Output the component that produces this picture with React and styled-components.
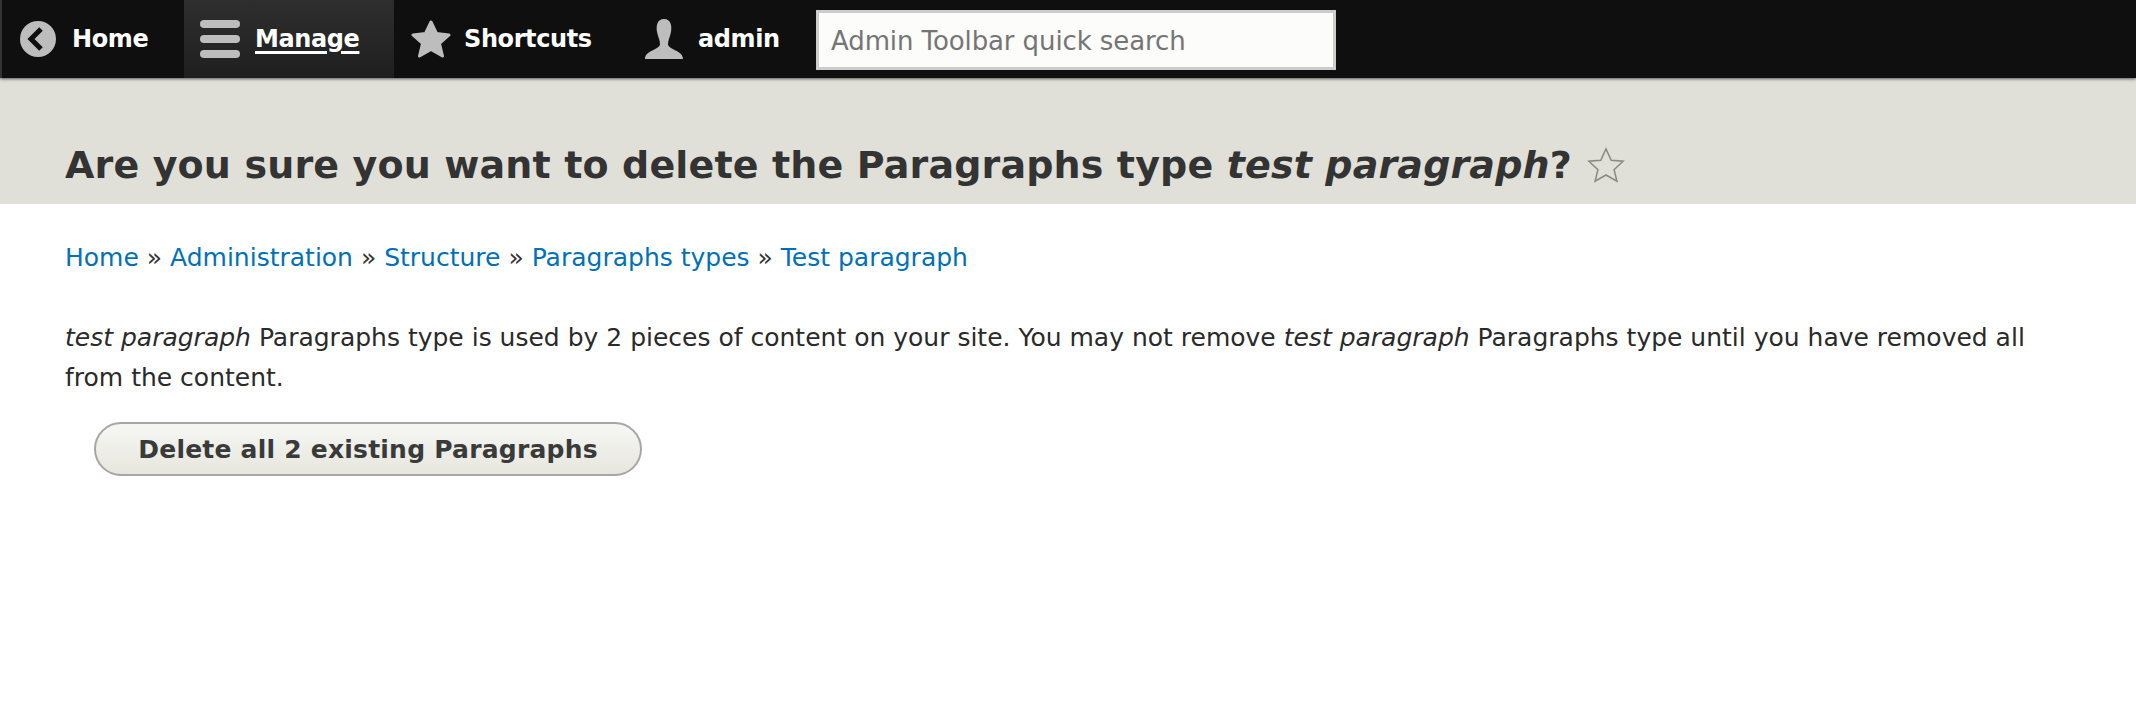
import React from "react";
import styled, { createGlobalStyle } from "styled-components";

const Global = createGlobalStyle`
  html, body { margin: 0; padding: 0; background: #fff; }
  body { font-family: "DejaVu Sans", "Liberation Sans", sans-serif; color: #333; }
`;
const Toolbar = styled.nav`
  height: 78px; background: #0f0f0f; display: flex; align-items: stretch;
  box-shadow: 0 1px 3px rgba(0,0,0,.6); position: relative; border-left: 2px solid #333; box-sizing: border-box;
`;
const Tab = styled.a`
  display: flex; align-items: center; width: ${p => p.$w}px; padding-left: ${p => p.$pad}px; box-sizing: border-box;
  gap: ${p => p.$gap}px; color: #fff; font-weight: 700; font-size: 24px; letter-spacing: -.4px;
  text-decoration: ${p => (p.$active ? "underline" : "none")}; text-decoration-thickness: 3px; text-underline-offset: 4px;
  background: ${p => (p.$active ? "linear-gradient(#2e2e2e,#1f1f1f)" : "transparent")};
`;
const Search = styled.input`
  width: 520px; height: 60px; margin: 10px 0 0 ${p => p.$ml}px; box-sizing: border-box; border: 3px solid #ccc;
  background: #fcfcfa; padding: 1px 12px 0; font: 26px "DejaVu Sans", sans-serif; letter-spacing: -.1px;
  &::placeholder { color: #757575; opacity: 1; }
`;
const Header = styled.header`
  height: 126px; background: #e0e0d8; box-sizing: border-box; padding: 63px 0 0 65px;
`;
const Title = styled.h1`
  margin: 0; display: flex; align-items: center; font-size: 38px; line-height: 48px; font-weight: 700; color: #333; white-space: pre; letter-spacing: .14px;
  & svg { margin-left: 15px; }
`;
const Main = styled.main`
  padding: 36px 65px 0;
`;
const Crumbs = styled.ol`
  list-style: none; margin: 0; padding: 0; display: flex; font-size: 25px; line-height: 36px; white-space: pre;
`;
const Link = styled.a` color: #0071b8; `;
const Para = styled.p`
  margin: 42px 0 0; font-size: 25px; line-height: 40px; color: #2a2a2a;
`;
const Button = styled.button`
  display: block; margin: 24px 0 0 29px; width: 548px; height: 54px; border-radius: 27px; border: 2px solid #a6a6a6;
  background: linear-gradient(#f6f6f3,#e7e7df); font: 700 25px "DejaVu Sans", sans-serif; letter-spacing: .22px; color: #3a3a3a; box-sizing: border-box; padding: 0;
`;

const HomeIcon = () => (
  <svg width="36" height="36" viewBox="0 0 36 36"><circle cx="18" cy="18" r="18" fill="#bdbdbd"/><path d="M21 8 L11 18 L21 28" fill="none" stroke="#0f0f0f" strokeWidth="5"/></svg>
);
const ManageIcon = () => (
  <svg width="40" height="38" viewBox="0 0 40 38" fill="#bdbdbd"><rect width="40" height="8" rx="4"/><rect y="15" width="40" height="8" rx="4"/><rect y="30" width="40" height="8" rx="4"/></svg>
);
const StarIcon = () => (
  <svg width="40" height="38" viewBox="0 0 40 38"><path d="M20 2 L25.5 13.5 L38 15 L28.5 23.5 L31.5 36 L20 29.5 L8.5 36 L11.5 23.5 L2 15 L14.5 13.5 Z" fill="#bdbdbd" stroke="#bdbdbd" strokeWidth="3" strokeLinejoin="round"/></svg>
);
const UserIcon = () => (
  <svg width="38" height="40" viewBox="0 0 38 40"><path d="M19 0 C26 0 27 7 26 13 C25 18 23 21 23 25 C23 31 38 31 38 40 L0 40 C0 31 15 31 15 25 C15 21 13 18 12 13 C11 7 12 0 19 0 Z" fill="#bdbdbd"/></svg>
);
const OutlineStar = () => (
  <svg width="38" height="38" viewBox="0 0 40 38"><path d="M20 2 L25.5 14 L38 15 L28.5 24 L31.5 36 L20 29.5 L8.5 36 L11.5 24 L2 15 L14.5 14 Z" fill="none" stroke="#8a8a80" strokeWidth="1.6"/></svg>
);

export default function App() {
  const crumbs = ["Home", "Administration", "Structure", "Paragraphs types", "Test paragraph"];
  return (
    <>
      <Global />
      <Toolbar>
        <Tab $w={182} $pad={18} $gap={16}><HomeIcon /><span>Home</span></Tab>
        <Tab $w={210} $pad={16} $gap={15} $active><ManageIcon /><span>Manage</span></Tab>
        <Tab $w={228} $pad={17} $gap={13}><StarIcon /><span>Shortcuts</span></Tab>
        <Tab $w={170} $pad={23} $gap={15}><UserIcon /><span>admin</span></Tab>
        <Search $ml={24} placeholder="Admin Toolbar quick search" />
      </Toolbar>
      <Header>
        <Title>Are you sure you want to delete the Paragraphs type <em>test paragraph</em>?<OutlineStar /></Title>
      </Header>
      <Main>
        <Crumbs>
          {crumbs.map((c, i) => (
            <li key={c}>{i > 0 && " » "}<Link>{c}</Link></li>
          ))}
        </Crumbs>
        <Para><em>test paragraph</em> Paragraphs type is used by 2 pieces of content on your site. You may not remove <em>test paragraph</em> Paragraphs type until you have removed all from the content.</Para>
        <Button>Delete all 2 existing Paragraphs</Button>
      </Main>
    </>
  );
}
